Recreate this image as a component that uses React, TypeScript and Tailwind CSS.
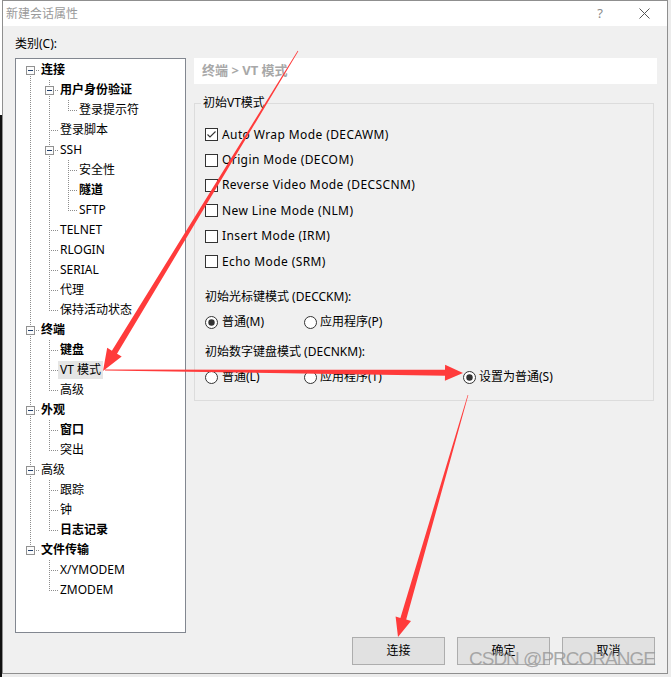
import React from "react";

type TreeNode = {
  level: number;
  label: string;
  bold?: boolean;
  parent?: boolean;
  selected?: boolean;
};

const TREE: TreeNode[] = [
  { level: 0, label: "连接", bold: true, parent: true },
  { level: 1, label: "用户身份验证", bold: true, parent: true },
  { level: 2, label: "登录提示符" },
  { level: 1, label: "登录脚本" },
  { level: 1, label: "SSH", parent: true },
  { level: 2, label: "安全性" },
  { level: 2, label: "隧道", bold: true },
  { level: 2, label: "SFTP" },
  { level: 1, label: "TELNET" },
  { level: 1, label: "RLOGIN" },
  { level: 1, label: "SERIAL" },
  { level: 1, label: "代理" },
  { level: 1, label: "保持活动状态" },
  { level: 0, label: "终端", bold: true, parent: true },
  { level: 1, label: "键盘", bold: true },
  { level: 1, label: "VT 模式", selected: true },
  { level: 1, label: "高级" },
  { level: 0, label: "外观", bold: true, parent: true },
  { level: 1, label: "窗口", bold: true },
  { level: 1, label: "突出" },
  { level: 0, label: "高级", parent: true },
  { level: 1, label: "跟踪" },
  { level: 1, label: "钟" },
  { level: 1, label: "日志记录", bold: true },
  { level: 0, label: "文件传输", bold: true, parent: true },
  { level: 1, label: "X/YMODEM" },
  { level: 1, label: "ZMODEM" },
];

const VT_MODES = [
  { label: "Auto Wrap Mode (DECAWM)", checked: true },
  { label: "Origin Mode (DECOM)" },
  { label: "Reverse Video Mode (DECSCNM)" },
  { label: "New Line Mode (NLM)" },
  { label: "Insert Mode (IRM)" },
  { label: "Echo Mode (SRM)" },
];

// does the node at `level` (owning row idx) have a later sibling?
function hasNext(idx: number, level: number) {
  for (let j = idx + 1; j < TREE.length; j++) {
    if (TREE[j].level < level) return false;
    if (TREE[j].level === level) return true;
  }
  return false;
}

function Guides({ idx }: { idx: number }) {
  const node = TREE[idx];
  const col = (l: number) => 14.5 + 19 * l;
  const x = col(node.level);
  const dash = { stroke: "#8d8d8d", strokeDasharray: "1 1" };
  return (
    <svg width={23 + 19 * node.level} height={20} shapeRendering="crispEdges" className="shrink-0">
      {Array.from({ length: node.level }, (_, l) =>
        hasNext(idx, l) ? <line key={l} x1={col(l)} y1={0} x2={col(l)} y2={20} {...dash} /> : null
      )}
      {idx !== 0 && <line x1={x} y1={0} x2={x} y2={10} {...dash} />}
      {hasNext(idx, node.level) && <line x1={x} y1={10} x2={x} y2={20} {...dash} />}
      <line x1={x - 0.5} y1={10.5} x2={x + 8.5} y2={10.5} {...dash} />
      {node.parent && (
        <g>
          <rect x={x - 4} y={6.5} width={8} height={8} fill="#fbfbfb" stroke="#919191" />
          <line x1={x - 2.5} y1={10.5} x2={x + 2.5} y2={10.5} stroke="#1f3d6b" />
        </g>
      )}
    </svg>
  );
}

function Checkbox({ checked }: { checked?: boolean }) {
  return (
    <svg width="13" height="13" className="shrink-0" shapeRendering="crispEdges">
      <rect x="0.5" y="0.5" width="12" height="12" fill="white" stroke="#333" />
      {checked && (
        <path d="M2.5 6.5 L5 9 L10.5 3.5" fill="none" stroke="#333" strokeWidth="1.1" shapeRendering="auto" />
      )}
    </svg>
  );
}

function Radio({ on }: { on?: boolean }) {
  return (
    <svg width="13" height="13" className="shrink-0">
      <circle cx="6.5" cy="6.5" r="6" fill="white" stroke="#333" />
      {on && <circle cx="6.5" cy="6.5" r="3.2" fill="#333" />}
    </svg>
  );
}

function arrowPoints(sx: number, sy: number, tx: number, ty: number, w0: number, w1: number, hl: number, hw: number) {
  const len = Math.hypot(tx - sx, ty - sy);
  const dx = (tx - sx) / len;
  const dy = (ty - sy) / len;
  const nx = -dy;
  const ny = dx;
  const bx = tx - dx * hl;
  const by = ty - dy * hl;
  const p = (x: number, y: number) => `${x.toFixed(1)},${y.toFixed(1)}`;
  return [
    p(sx + (nx * w0) / 2, sy + (ny * w0) / 2),
    p(bx + (nx * w1) / 2, by + (ny * w1) / 2),
    p(bx + (nx * hw) / 2, by + (ny * hw) / 2),
    p(tx, ty),
    p(bx - (nx * hw) / 2, by - (ny * hw) / 2),
    p(bx - (nx * w1) / 2, by - (ny * w1) / 2),
    p(sx - (nx * w0) / 2, sy - (ny * w0) / 2),
  ].join(" ");
}

export default function App() {
  return (
    <div className="relative w-[671px] h-[677px] bg-[#ececec] flex overflow-hidden text-[12px] text-black font-['Noto_Sans','Noto_Sans_CJK_SC',sans-serif]">
      <div className="w-[2px] flex flex-col">
        <div className="h-[115px] bg-white" />
        <div className="flex-1 bg-[#111]" />
      </div>

      {/* dialog window */}
      <div className="w-[666px] h-[674px] border border-[#8f8f8f] bg-[#f0f0f0] flex flex-col">
        <div className="h-[25px] bg-white flex items-center pl-[3px] text-[#9a9a9a]">
          <span className="flex-1">新建会话属性</span>
          <span className="text-[13px] text-[#8a8a8a] w-[12px] text-center">?</span>
          <svg width="11" height="11" className="ml-[33px] mr-[17px]">
            <path d="M0.5 0.5 L10.5 10.5 M10.5 0.5 L0.5 10.5" stroke="#555" strokeWidth="1" />
          </svg>
        </div>

        <div className="pl-[12px] pt-[10px]">
          <div className="h-[16px] leading-[16px]">类别(C):</div>

          <div className="flex mt-[6px]">
            {/* category tree */}
            <div className="w-[171px] h-[575px] pt-[1px] border border-[#828790] bg-white">
              {TREE.map((node, i) => (
                <div key={i} className="flex items-center h-[20px]">
                  <Guides idx={i} />
                  <span
                    className={`h-[18px] px-[2px] flex items-center whitespace-nowrap ${
                      node.bold ? "font-bold" : ""
                    } ${node.selected ? "bg-[#e5e5e5]" : ""}`}
                  >
                    {node.label}
                  </span>
                </div>
              ))}
            </div>

            {/* settings panel */}
            <div className="ml-[8px] w-[463px] flex flex-col">
              <div className="h-[26px] bg-white flex items-center pl-[8px] text-[13px] font-bold text-[#a8a8a8]">
                终端 &gt; VT 模式
              </div>

              <fieldset className="mt-[11px] w-[460px] h-[306px] border border-[#dcdcdc]">
                <legend className="ml-[6px] px-[2px] leading-[16px]">初始VT模式</legend>
                <div className="pl-[10px] pt-[11px] flex flex-col">
                  {VT_MODES.map((m) => (
                    <div key={m.label} className="h-[25.4px] flex items-center gap-[4px]">
                      <Checkbox checked={m.checked} />
                      <span className="tracking-[0.4px]">{m.label}</span>
                    </div>
                  ))}

                  <div className="mt-[13px] h-[20px] flex items-center">初始光标键模式 (DECCKM):</div>
                  <div className="mt-[5px] h-[20px] flex items-center">
                    <div className="w-[99px] flex items-center gap-[4px]">
                      <Radio on />
                      <span>普通(M)</span>
                    </div>
                    <div className="flex items-center gap-[3px]">
                      <Radio />
                      <span>应用程序(P)</span>
                    </div>
                  </div>

                  <div className="mt-[10px] h-[20px] flex items-center">初始数字键盘模式 (DECNKM):</div>
                  <div className="mt-[5px] h-[20px] flex items-center">
                    <div className="w-[99px] flex items-center gap-[4px]">
                      <Radio />
                      <span>普通(L)</span>
                    </div>
                    <div className="w-[159px] flex items-center gap-[3px]">
                      <Radio />
                      <span>应用程序(T)</span>
                    </div>
                    <div className="flex items-center gap-[3px]">
                      <Radio on />
                      <span>设置为普通(S)</span>
                    </div>
                  </div>
                </div>
              </fieldset>
            </div>
          </div>
        </div>

        <div className="mt-[4px] flex justify-end gap-[12px] pr-[12px]">
          {["连接", "确定", "取消"].map((b) => (
            <button
              key={b}
              className="w-[93px] h-[28px] bg-[#e1e1e1] border border-[#adadad] flex items-center justify-center"
            >
              {b}
            </button>
          ))}
        </div>
      </div>

      {/* watermark */}
      <div className="absolute left-[469px] top-[649px] text-[19px] leading-[19px] tracking-[-1px] text-[rgba(150,150,150,0.8)] font-['Liberation_Sans',sans-serif] pointer-events-none">
        CSDN @PRCORANGE
      </div>

      {/* red annotation arrows */}
      <svg className="absolute left-0 top-0 pointer-events-none" width="671" height="677">
        <polygon points={arrowPoints(298, 51, 103, 371, 0.6, 6, 22, 17)} fill="#ff3b3b" />
        <polygon points={arrowPoints(105, 370, 463, 373, 1, 6, 18, 16)} fill="#ff3b3b" />
        <polygon points={arrowPoints(468, 395, 398, 637, 0.6, 6, 19, 16)} fill="#ff3b3b" />
      </svg>
    </div>
  );
}
